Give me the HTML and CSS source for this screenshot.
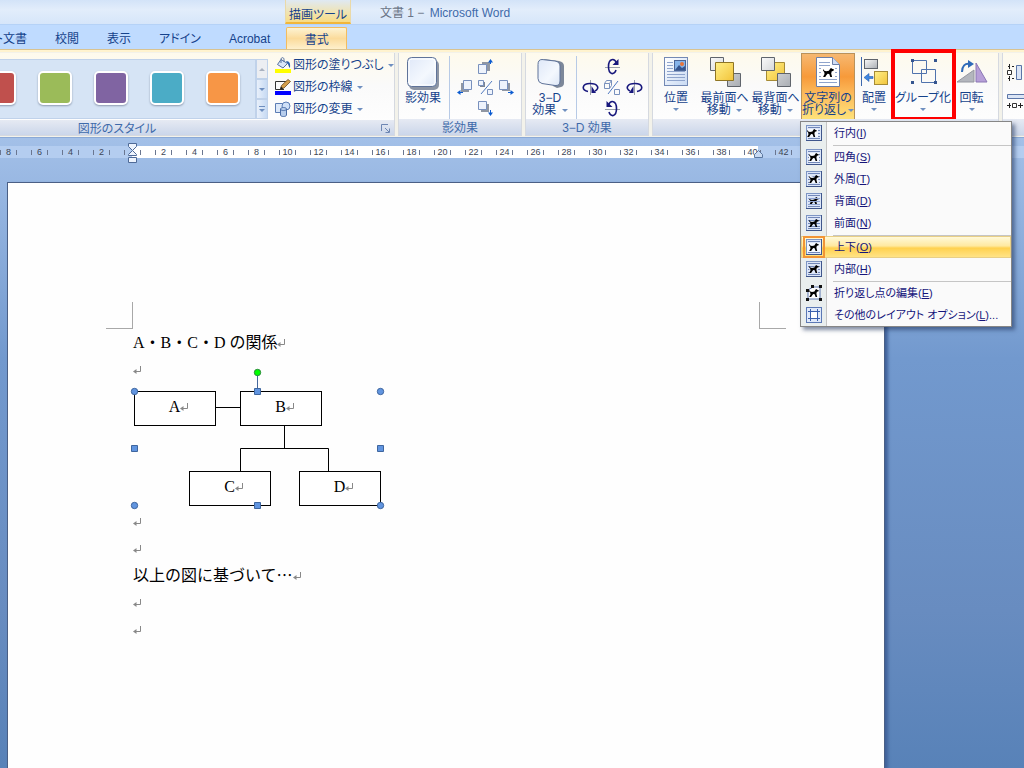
FILE: index.html
```html
<!DOCTYPE html>
<html lang="ja">
<head>
<meta charset="utf-8">
<title>文書 1 - Microsoft Word</title>
<link rel="stylesheet" href="styles.css">
</head>
<body>
<svg class="defs" aria-hidden="true">
  <defs>
    <linearGradient id="g-tile" x1="0" y1="0" x2="1" y2="1"><stop offset="0" stop-color="#dfe8f8"/><stop offset=".6" stop-color="#f4f8fe"/><stop offset="1" stop-color="#dce6f6"/></linearGradient>
    <linearGradient id="g-gold" x1="0" y1="0" x2="1" y2="1"><stop offset="0" stop-color="#fff08a"/><stop offset="1" stop-color="#f2c43a"/></linearGradient>
    <linearGradient id="g-gray" x1="0" y1="0" x2="1" y2="1"><stop offset="0" stop-color="#fafafa"/><stop offset="1" stop-color="#a9adb3"/></linearGradient>
    <linearGradient id="g-doc" x1="0" y1="0" x2="1" y2="1"><stop offset="0" stop-color="#ffffff"/><stop offset="1" stop-color="#c9daf3"/></linearGradient>
    <symbol id="dog" viewBox="0 0 12 10"><path d="M0 1 1.400 3 3.500 3.600 6.500 3 8 .5 9 0 9.800.9 12 1.500 11.400 3.200 9.600 3.500 9 6 10 10H8L6.800 6.600 5 6.400 3.600 8 2.400 10H0L1.600 6.800 1.200 4.400 0 3Z" fill="#000"/></symbol>
    <symbol id="ret" viewBox="0 0 8 9"><path d="M7.500 0v5.500H1.500" fill="none" stroke="#888"/><path d="M0 5.500 3.500 3v5Z" fill="#888"/></symbol>
    <symbol id="lines" viewBox="0 0 16 16"><rect x=".5" y=".5" width="15" height="15" fill="#dce6f8" stroke="#7d95c4"/><path d="M0 15.500h16M15.500 0v16" stroke="#3f568c"/><path d="M2 2.500h12M2 5.500h12M2 8.500h12M2 11.500h12M2 13.500h12" stroke="#7288b8"/></symbol>
  </defs>
</svg>

<header class="titlebar">
  <span class="context">描画ツール</span>
  <h1 class="title">文書 1 − <span>Microsoft Word</span></h1>
</header>

<nav class="tabs">
  <button class="tab tab-cut">ト文書</button>
  <button class="tab">校閲</button>
  <button class="tab">表示</button>
  <button class="tab">アドイン</button>
  <button class="tab">Acrobat</button>
  <button class="tab tab-on">書式</button>
</nav>

<div class="ribbon">
  <section class="group group-styles">
    <div class="body">
      <div class="gallery">
        <button class="swatch red" aria-label="赤"></button>
        <button class="swatch green" aria-label="緑"></button>
        <button class="swatch purple" aria-label="紫"></button>
        <button class="swatch teal" aria-label="水色"></button>
        <button class="swatch orange" aria-label="オレンジ"></button>
      </div>
      <div class="scroller">
        <button class="off" aria-label="上へ"><i class="up"></i></button>
        <button aria-label="下へ"><i class="arrow"></i></button>
        <button aria-label="その他"><i class="bar"></i><i class="arrow"></i></button>
      </div>
      <div class="stack">
        <button class="small"><svg width="16" height="16" viewBox="0 0 16 16"><path d="M6 2.500 12.500 6.500 8 11 2.500 7.500Z" fill="#dbe6f7" stroke="#55709f"/><path d="M6 6V2.500C6 0 9 0 9 2.500V5" fill="none" stroke="#55709f"/><path d="M11 4c4 0 4.500 3 4 7-1.500-1-1.500-4-3-5Z" fill="#2f61ab"/><path d="M0 12h16v4H0z" fill="#ff0"/></svg>図形の塗りつぶし<i class="arrow"></i></button>
        <button class="small"><svg width="16" height="16" viewBox="0 0 16 16"><path d="M12 2.500H.5v8H9" fill="none" stroke="#333"/><path d="m5.500 10 1-3.500L13 .5l2.500 2L9 9Z" fill="#d6a04c" stroke="#6b4a1d" stroke-width=".8"/><path d="m5 10.500 1-3L8.500 9.500Z" fill="#222"/><path d="M0 12h16v4H0z" fill="#00f"/></svg>図形の枠線<i class="arrow"></i></button>
        <button class="small"><svg width="16" height="16" viewBox="0 0 16 16"><path d="M.5 2.500h10v9H.5z" fill="#dce8f9" stroke="#5b7cb4"/><circle cx="11" cy="5" r="4" fill="#cfe0f7" stroke="#5b7cb4"/><path d="M5.500 8v6c0 2 6 2 6 0V8c0-2-6-2-6 0Z" fill="#b7cdec" stroke="#4a6ca6"/><path d="M5.500 8c0 2 6 2 6 0" fill="none" stroke="#4a6ca6"/></svg>図形の変更<i class="arrow"></i></button>
      </div>
    </div>
    <footer class="caption">図形のスタイル<button class="launch" aria-label="図形の書式設定"><svg width="9" height="9" viewBox="0 0 9 9"><path d="M.5 7V.5H7M4 4l4 4M8.500 4.500v4h-4" fill="none" stroke="#6d86b3"/></svg></button></footer>
  </section>

  <section class="group group-fx">
    <div class="body">
      <button class="big"><svg width="34" height="34" viewBox="0 0 34 34"><rect x="3" y="4" width="30" height="30" rx="5" fill="#8c95a5"/><rect x="1.500" y="1.500" width="29" height="29" rx="4" fill="url(#g-tile)" stroke="#5f7399"/><rect x="3" y="3" width="26" height="26" rx="3" fill="none" stroke="#fff"/></svg><span>影効果</span><i class="arrow"></i></button>
      <div class="pad pad-shadow">
        <button class="n" aria-label="影を上へ"><svg width="15" height="15" viewBox="0 0 15 15"><path d="M4 3h8v9H4z" fill="#9097a3"/><path d="M.5 5.500h8v9h-8z" fill="#eef3fc" stroke="#7890bd"/><path d="M12.500 5V1" stroke="#0b5bd0"/><path d="M10 3.500 12.500 0 15 3.500Z" fill="#0b5bd0"/></svg></button>
        <button class="w" aria-label="影を左へ"><svg width="15" height="15" viewBox="0 0 15 15"><path d="M4 3h8v9H4z" fill="#9097a3"/><path d="M6.500.5h8v9h-8z" fill="#eef3fc" stroke="#7890bd"/><path d="M6 12.500H1" stroke="#0b5bd0"/><path d="M3.500 10 0 12.500 3.500 15Z" fill="#0b5bd0"/></svg></button>
        <button class="c" aria-label="影の切り替え"><svg width="15" height="15" viewBox="0 0 15 15"><path d="M2 2h5v5H2z" fill="#7d8490"/><path d="M.5.5h5v5h-5zM9.500 9.500h5v5h-5z" fill="#eef3fc" stroke="#7890bd"/><path d="M14 1 3 14" stroke="#4f79c0"/></svg></button>
        <button class="e" aria-label="影を右へ"><svg width="15" height="15" viewBox="0 0 15 15"><path d="M3 3h8v8H3z" fill="#9097a3"/><path d="M.5.5h8v9h-8z" fill="#eef3fc" stroke="#7890bd"/><path d="M9 12.500h5" stroke="#0b5bd0"/><path d="M11.500 10 15 12.500 11.500 15Z" fill="#0b5bd0"/></svg></button>
        <button class="s" aria-label="影を下へ"><svg width="15" height="15" viewBox="0 0 15 15"><path d="M3 3h8v8H3z" fill="#9097a3"/><path d="M.5.5h8v8h-8z" fill="#eef3fc" stroke="#7890bd"/><path d="M12.500 9v5" stroke="#0b5bd0"/><path d="M10 11.500 12.500 15 15 11.500Z" fill="#0b5bd0"/></svg></button>
      </div>
    </div>
    <footer class="caption">影効果</footer>
  </section>

  <section class="group group-fx">
    <div class="body">
      <button class="big"><svg width="34" height="34" viewBox="0 0 34 34"><path d="M11 3 26 5q5 1 5 5v17q0 3-3 4l-4 1-4-2Z" fill="#7c8799"/><path d="M9 3.500 22 5q5 1 5 5v15q0 5-5 4.500L9 27.500q-4-1-4-5v-14q0-5 4-5Z" fill="url(#g-tile)" stroke="#5f7399"/></svg><span>3−D<br>効果 <i class="arrow"></i></span></button>
      <div class="pad pad-3d">
        <button class="n" aria-label="上へ傾ける"><svg width="17" height="17" viewBox="0 0 17 17"><path d="M1 9.500h15" stroke="#9aa0aa"/><path d="M12 12c-1.500 5.500-7.500 5-7.500-3.500S10.500 0 12.500 5" fill="none" stroke="#17177c" stroke-width="1.600"/><path d="M8.500 7h6V1Z" fill="#17177c"/></svg></button>
        <button class="w" aria-label="左へ傾ける"><svg width="17" height="17" viewBox="0 0 17 17"><path d="M8.500 1v15" stroke="#9aa0aa"/><path d="M6 12.500C-1 11 0 4.500 8 4.500s10 5 5 7.500" fill="none" stroke="#17177c" stroke-width="1.600"/><path d="M9.500 7v7H14Z" fill="#17177c"/></svg></button>
        <button class="c" aria-label="3-D の切り替え"><svg width="16" height="15" viewBox="0 0 16 15"><path d="M.5 3.500h5v5h-5zl2-3h5v5l-2 3M5.500 3.500l2-3M10.500 9.500h5v5h-5z" fill="none" stroke="#7890bd"/><path d="M14 1 4 14" stroke="#4f79c0"/></svg></button>
        <button class="e" aria-label="右へ傾ける"><svg width="17" height="17" viewBox="0 0 17 17"><path d="M8.500 1v15" stroke="#9aa0aa"/><path d="M11 12.500c7-1.500 6-8-2-8s-10 5-5 7.500" fill="none" stroke="#17177c" stroke-width="1.600"/><path d="M7.500 7v7H3Z" fill="#17177c"/></svg></button>
        <button class="s" aria-label="下へ傾ける"><svg width="17" height="17" viewBox="0 0 17 17"><path d="M1 9.500h15" stroke="#9aa0aa"/><path d="M5 12c1.500 5.500 7.500 5 7.500-3.500S6.500 0 4.500 5" fill="none" stroke="#17177c" stroke-width="1.600"/><path d="M8.500 7h-6V1Z" fill="#17177c"/></svg></button>
      </div>
    </div>
    <footer class="caption">3−D 効果</footer>
  </section>

  <section class="group group-arrange">
    <div class="body">
      <button class="big b-pos"><svg width="34" height="34" viewBox="0 0 34 34"><rect x="5.500" y="1.500" width="23" height="28" fill="url(#g-doc)" stroke="#7389b4"/><path d="M8 6.500h6M8 9.500h6M8 12.500h6M8 15.500h18M8 18.500h18M8 21.500h18M8 24.500h18" stroke="#8fa4cc"/><rect x="15.500" y="4.500" width="11" height="10" fill="#86b4ea" stroke="#4a6596"/><path d="m16 14 4-5 3 3 3-2v4Z" fill="#35558f"/><circle cx="23" cy="8" r="2" fill="#e8743a"/></svg><span>位置</span><i class="arrow"></i></button>
      <button class="big b-ord"><svg width="34" height="34" viewBox="0 0 34 34"><path d="M2.500 1.500h13v13h-13zM19.500 17.500h13v13h-13z" fill="url(#g-gray)" stroke="#5f646c"/><path d="M7.500 6.500h18v18h-18z" fill="url(#g-gold)" stroke="#8f7524"/></svg><span>最前面へ<br>移動 <i class="arrow"></i></span></button>
      <button class="big b-ord"><svg width="34" height="34" viewBox="0 0 34 34"><path d="M7.500 6.500h18v18h-18z" fill="url(#g-gold)" stroke="#a68b35"/><path d="M2.500 1.500h13v13h-13zM18.500 17.500h13v13h-13z" fill="url(#g-gray)" stroke="#5f646c"/></svg><span>最背面へ<br>移動 <i class="arrow"></i></span></button>
      <div class="dropdown">
        <button class="big b-wrap" aria-expanded="true"><svg width="34" height="34" viewBox="0 0 34 34"><path d="M5.500 1.500h16l7 7v22h-23z" fill="#fff" stroke="#6c7fa8"/><path d="M21.500 1.500v7h7" fill="#cfdcf2" stroke="#6c7fa8"/><path d="M8 6.500h11M8 9.500h11M8 23.500h18M8 26.500h18M8 12.500h2M24 12.500h2M8 16.500h2M24 16.500h2M8 20.500h2M24 20.500h2" stroke="#8fa4cc"/><use href="#dog" x="12" y="12" width="11" height="9"/></svg><span>文字列の<br>折り返し<i class="arrow"></i></span></button>
        <div class="menu" role="menu">
          <button role="menuitem"><svg viewBox="0 0 16 16"><use href="#lines"/><path d="M1 4h11v8H1z" fill="#f4f8ff"/><use href="#dog" x="1" y="4" width="10" height="8"/></svg>行内(<u>I</u>)</button>
          <hr>
          <button role="menuitem"><svg viewBox="0 0 16 16"><use href="#lines"/><path d="M3 4h10v9H3z" fill="#f4f8ff"/><use href="#dog" x="3" y="4" width="10" height="8"/></svg>四角(<u>S</u>)</button>
          <button role="menuitem"><svg viewBox="0 0 16 16"><use href="#lines"/><path d="m2 4 6 2 5-2-1 4 1 4H3l1-4Z" fill="#f4f8ff"/><use href="#dog" x="3" y="4" width="10" height="8"/></svg>外周(<u>T</u>)</button>
          <button role="menuitem"><svg viewBox="0 0 16 16"><use href="#lines"/><use href="#dog" x="3" y="4" width="10" height="8"/><path d="M2 5.500h12M2 8.500h12M2 11.500h12" stroke="#8fa4d2"/></svg>背面(<u>D</u>)</button>
          <button role="menuitem"><svg viewBox="0 0 16 16"><use href="#lines"/><use href="#dog" x="3" y="4" width="10" height="8"/></svg>前面(<u>N</u>)</button>
          <hr>
          <button role="menuitem" class="on"><svg viewBox="0 0 16 16"><use href="#lines"/><path d="M1 4h14v9H1z" fill="#f4f8ff"/><use href="#dog" x="3" y="4" width="10" height="8"/></svg>上下(<u>O</u>)</button>
          <button role="menuitem"><svg viewBox="0 0 16 16"><use href="#lines"/><path d="m3 6 5 0 4-2v8H4Z" fill="#dfe8fa"/><use href="#dog" x="3" y="4" width="10" height="8"/></svg>内部(<u>H</u>)</button>
          <hr>
          <button role="menuitem"><svg viewBox="0 0 16 16"><path d="M2 5 7 2h7v12H2Z" fill="#fff" stroke="#5d76ae"/><path d="M0 4h3v3H0zM5 0h3v3H5zM13 0h3v3h-3zM0 13h3v3H0zM13 13h3v3h-3z" fill="#111"/><use href="#dog" x="3" y="4" width="10" height="8"/></svg>折り返し点の編集(<u>E</u>)</button>
          <button role="menuitem"><svg viewBox="0 0 16 16"><rect x=".5" y=".5" width="15" height="15" fill="#dfe9fa" stroke="#5b78b5"/><path d="M2 4.500h12M2 11.500h12M4.500 2v12M11.500 2v12" stroke="#3a5fae"/><path d="M5 5h6v6H5z" fill="#fff"/></svg>その他のレイアウト オプション(<u>L</u>)...</button>
        </div>
      </div>
      <button class="big b-align"><svg width="28" height="34" viewBox="0 0 28 34"><path d="M1.500 1v29" stroke="#3d68ae"/><rect x="4.500" y="3.500" width="13" height="9" fill="url(#g-gray)" stroke="#5f646c"/><rect x="14.500" y="15.500" width="13" height="13" fill="url(#g-gold)" stroke="#a68b35"/><path d="m4 21.500 5-4v3h4v2H9v3Z" fill="#3f86e0" stroke="#2a5fae" stroke-width=".6"/></svg><span>配置</span><i class="arrow"></i></button>
      <button class="big b-group"><svg width="34" height="34" viewBox="0 0 34 34"><path d="M6.500 4.500h14v13h-14zM15.500 13.500h14v13h-14z" fill="none" stroke="#4f72ad"/><path d="M5 3h3v3H5zM28 3h3v3h-3zM5 25h3v3H5zM28 25h3v3h-3z" fill="#35558f"/></svg><span>グループ化</span><i class="arrow"></i></button>
      <button class="big b-rot"><svg width="34" height="34" viewBox="0 0 34 34"><path d="M2 26 19 14v12Z" fill="#b3b6bd" stroke="#9497a0"/><path d="M21 26V7l11 19Z" fill="#b79fd8" stroke="#8a77b4"/><path d="M7 16c0-6 3-9 8-8" fill="none" stroke="#2f6ab8" stroke-width="2"/><path d="m13 4 6 4-6 4Z" fill="#2f6ab8"/></svg><span>回転</span><i class="arrow"></i></button>
    </div>
    <footer class="caption"></footer>
  </section>

  <section class="group group-size">
    <div class="body">
      <svg width="24" height="17" viewBox="0 0 24 17"><path d="M.5 6.500h4v4h-4z" fill="#fff" stroke="#333"/><path d="M1 2.500h8M1 14.500h8" stroke="#222" stroke-dasharray="2 2"/><path d="M2.500 0v5M2.500 12v5" stroke="#222"/><path d="M9.500 1.500h5v14h-5z" fill="#dbe5f5" stroke="#5b76a8"/></svg>
      <svg width="24" height="17" viewBox="0 0 24 17"><path d="M.5 1.500h18v4H.5z" fill="#dbe5f5" stroke="#5b76a8"/><path d="M5.500 10.500h4v4h-4z" fill="#fff" stroke="#333"/><path d="M0 12.500h4M11 12.500h5M2.500 10v5M13.500 10v5" stroke="#222"/></svg>
    </div>
    <footer class="caption"></footer>
  </section>
</div>

<main class="workspace">
  <div class="ruler">
    <div class="scale">
      <span>8</span><span>6</span><span>4</span><span>2</span><span></span><span>2</span><span>4</span><span>6</span><span>8</span><span>10</span><span>12</span><span>14</span><span>16</span><span>18</span><span>20</span><span>22</span><span>24</span><span>26</span><span>28</span><span>30</span><span>32</span><span>34</span><span>36</span><span>38</span><span>40</span><span>42</span>
    </div>
    <svg class="indent indent-left" width="9" height="20" viewBox="0 0 9 20"><path d="M.5.5h8v3l-4 4-4-4z" fill="#eef4fd" stroke="#4f6a97"/><path d="M4.500 7.500l4 4v1h-8v-1z" fill="#eef4fd" stroke="#4f6a97"/><path d="M.5 14.500h8v5h-8z" fill="#eef4fd" stroke="#4f6a97"/></svg>
    <svg class="indent indent-right" width="9" height="8" viewBox="0 0 9 8"><path d="M4.500.5l4 4v3h-8v-3z" fill="#c8daf3" stroke="#5a779f"/></svg>
  </div>

  <article class="paper">
    <div class="crops"><i class="crop-l"></i><i class="crop-r"></i></div>
    <div class="text">
      <p>A・B・C・D の関係<svg class="ret"><use href="#ret"/></svg></p>
      <p><svg class="ret"><use href="#ret"/></svg></p>
      <div class="diagram">
        <svg class="wires" width="247" height="115" viewBox="0 0 247 115"><path d="M81 16.500h26M150.500 34v23.500M106.500 81V57.500h88V81" fill="none" stroke="#000"/></svg>
        <div class="node node-a">A<svg class="ret"><use href="#ret"/></svg></div>
        <div class="node node-b">B<svg class="ret"><use href="#ret"/></svg></div>
        <div class="node node-c">C<svg class="ret"><use href="#ret"/></svg></div>
        <div class="node node-d">D<svg class="ret"><use href="#ret"/></svg></div>
        <svg class="handles" width="256" height="140" viewBox="0 0 256 140"><path d="M127.500 8v13" stroke="#44679c"/><g fill="#6195e0" stroke="#3f669f"><circle cx="4.500" cy="24.500" r="3.200"/><circle cx="250.500" cy="24.500" r="3.200"/><circle cx="4.500" cy="138.500" r="3.200"/><circle cx="250.500" cy="138.500" r="3.200"/><path d="M124.500 21.500h6v6h-6zM1.500 78.500h6v6h-6zM247.500 78.500h6v6h-6zM124.500 135.500h6v6h-6z"/></g><circle cx="127.500" cy="5.500" r="3.200" fill="#0f0" stroke="#2c8a3c"/></svg>
      </div>
      <p><svg class="ret"><use href="#ret"/></svg></p>
      <p><svg class="ret"><use href="#ret"/></svg></p>
      <p class="cjk">以上の図に基づいて…<svg class="ret"><use href="#ret"/></svg></p>
      <p><svg class="ret"><use href="#ret"/></svg></p>
      <p><svg class="ret"><use href="#ret"/></svg></p>
    </div>
  </article>
</main>
</body>
</html>
```

FILE: styles.css
```css
* { box-sizing: border-box; }

html, body { height: 100%; }

body {
  margin: 0;
  display: flex;
  flex-direction: column;
  overflow: hidden;
  background: #bfdbff;
  color: #15428b;
  font: 12px/12px "Liberation Sans", "Noto Sans CJK JP", sans-serif;
  font-feature-settings: "palt";
}

button {
  margin: 0;
  padding: 0;
  border: 0;
  background: none;
  color: inherit;
  font: inherit;
  font-feature-settings: inherit;
  white-space: nowrap;
}

svg { display: block; flex: none; }
.defs { position: absolute; width: 0; height: 0; }

/* Title bar */
.titlebar {
  flex: none;
  display: flex;
  height: 25px;
  padding-left: 285px;
  background: linear-gradient(#d3e3f8, #e2edfb 40%, #d6e6fa);
  border-bottom: 1px solid #b5d2f7;
}
.context {
  width: 66px;
  padding-top: 9px;
  text-align: center;
  background: linear-gradient(#dfe9f3, #f1e3ae 60%, #f8dc84);
  border-bottom: 2px solid #f2b63a;
  border-left: 1px solid #ead9a8;
  border-right: 1px solid #ead9a8;
}
.title {
  margin: 0 0 0 29px;
  padding-top: 7px;
  font-size: 12px;
  line-height: 12px;
  font-weight: 400;
  color: #6a7486;
}
.title span { color: #3e6aaa; margin-left: 2px; }

/* Tab strip */
.tabs {
  flex: none;
  display: flex;
  height: 24px;
  align-items: flex-end;
  background: #bfdbff;
}
.tab { height: 22px; padding: 2px 14px 0; }
.tab-cut { display: flex; align-items: center; justify-content: flex-end; width: 41px; }
.tab-on {
  width: 61px;
  margin-left: 2px;
  background: linear-gradient(#fdf3d3, #fbdb9b 50%, #fef0cc);
  border: 1px solid #f3bd5f;
  border-bottom: 0;
  border-radius: 2px 2px 0 0;
}

/* Ribbon */
.ribbon {
  flex: none;
  display: flex;
  gap: 3px;
  position: relative;
  z-index: 2;
  height: 89px;
  padding: 3px 0 1px;
  background: #f3f2ea;
  border-top: 1px solid #d9c391;
  border-bottom: 1px solid #8ba9d6;
  box-shadow: inset 0 2px #fff3cf;
}
.group {
  flex: none;
  display: flex;
  flex-direction: column;
  border: 1px solid #d5d9e0;
  border-top: 0;
  background: linear-gradient(#fefaec, #fafafa 40%, #ffffff);
}
.group-styles { width: 395px; border-left: 0; }
.group-fx { width: 124px; }
.group-arrange { width: 347px; }
.group-size { flex: 1 0 auto; }
.body { flex: 1; display: flex; }
.caption {
  position: relative;
  height: 16px;
  padding-top: 3px;
  text-align: center;
  color: #3e6aaa;
  background: linear-gradient(#e6eaf3, #cbd6ea);
}
.group-styles .caption { padding-right: 160px; }
.launch { position: absolute; right: 4px; top: 4px; }

.arrow {
  display: inline-block;
  width: 0;
  height: 0;
  margin-left: 6px;
  border: 3px solid transparent;
  border-top-color: #6f8fc0;
  border-bottom: 0;
  vertical-align: middle;
}

/* Shape style gallery */
.gallery {
  display: flex;
  gap: 22px;
  width: 256px;
  height: 60px;
  margin-top: 6px;
  padding-top: 11px;
  overflow: hidden;
  background: #d6e4f5;
  border: 1px solid #c0d2ea;
  border-left: 0;
}
.swatch {
  flex: none;
  width: 34px;
  height: 34px;
  border: 2px solid #fff;
  border-radius: 5px;
  box-shadow: 0 1px 2px #8d9ab0;
}
.swatch:first-child { margin-left: -18px; }
.red { background: #c0504d; }
.green { background: #9bbb59; }
.purple { background: #8064a2; }
.teal { background: #4bacc6; }
.orange { background: #f79646; }

.scroller {
  display: flex;
  flex-direction: column;
  width: 12px;
  height: 60px;
  margin-top: 6px;
}
.scroller button {
  flex: 1;
  display: flex;
  flex-direction: column;
  align-items: center;
  justify-content: center;
  gap: 2px;
  background: linear-gradient(90deg, #e8f0fb, #c7daf3);
  border: 1px solid #c0d2ea;
}
.scroller .off { background: #eceef2; }
.scroller .arrow { margin: 0; }
.up { border: 3px solid transparent; border-top: 0; border-bottom-color: #aab2c0; }
.bar { width: 6px; height: 1px; background: #6f8fc0; }

.stack { display: flex; flex-direction: column; padding: 1px 0 0 7px; }
.small { display: flex; align-items: center; gap: 2px; height: 22px; }
.small .arrow { margin-left: 2px; }

/* Large ribbon buttons */
.big {
  display: flex;
  flex-direction: column;
  align-items: center;
  flex: none;
  height: 66px;
  padding-top: 3px;
  text-align: center;
}
.big span { margin-top: 2px; }
.big span .arrow { margin-left: 2px; }
.big > .arrow { margin: 4px 0 0; }
.group-fx .big { width: 48px; }

.pad {
  display: grid;
  align-content: start;
  grid-template-rows: repeat(3, 21px);
  grid-template-areas: ". n ." "w c e" ". s .";
  margin: 3px 0 0 2px;
  padding-left: 4px;
  border-left: 1px solid #b7cae6;
}
.pad button { display: grid; place-items: center; }
.pad-shadow { grid-template-columns: repeat(3, 21px); }
.pad-3d { grid-template-columns: repeat(3, 22px); padding-left: 2px; }
.n { grid-area: n; }
.w { grid-area: w; }
.c { grid-area: c; }
.e { grid-area: e; }
.s { grid-area: s; }

.b-pos { width: 46px; }
.b-ord { width: 51px; }
.b-wrap {
  width: 54px;
  background: linear-gradient(#f6b871, #f79a3a 35%, #fcb95a 60%, #ffe27a);
  border: 1px solid #b9925a;
  border-bottom: 0;
  padding-top: 2px;
}
.b-align { width: 38px; }
.b-group { position: relative; width: 60px; }
.b-group::after {
  content: "";
  position: absolute;
  inset: -4px -3px -2px -2px;
  border: 4px solid #f00;
}
.b-rot { width: 37px; }

.group-size .body {
  flex-direction: column;
  gap: 12px;
  padding: 11px 0 0 4px;
}

/* Text wrapping menu */
.dropdown { position: relative; z-index: 3; }
.menu {
  position: absolute;
  left: -1px;
  top: 68px;
  width: 212px;
  background: linear-gradient(90deg, #e9eeee 25px, #c5c5c5 25px, #c5c5c5 26px, #fafafa 26px);
  border: 1px solid #868686;
  box-shadow: 3px 3px 4px rgba(30, 50, 90, .55);
  color: #15157a;
  font-size: 11px;
}
.menu button {
  display: flex;
  align-items: center;
  width: 100%;
  height: 22px;
  padding-left: 5px;
}
.menu svg { width: 16px; height: 16px; margin-right: 12px; }
.menu hr {
  height: 2px;
  margin: 0 0 0 32px;
  border: 0;
  border-bottom: 1px solid #c5c5c5;
}
.menu .on {
  background: linear-gradient(#fffbe0, #ffe9a0 45%, #ffd14f 55%, #ffe58c);
  box-shadow: inset 0 0 0 1px #e8cf86;
}
.menu .on svg { outline: 2px solid #f29536; outline-offset: 1px; }

/* Workspace */
.workspace {
  flex: 1;
  min-height: 0;
  display: flex;
  flex-direction: column;
  overflow: hidden;
  background: linear-gradient(#a3c0e8, #7299ce 35%, #688cc0 75%, #5882b8);
}
.ruler {
  flex: none;
  position: relative;
  height: 12px;
  margin: 8px 0 24px;
  background: linear-gradient(90deg, #b4cdf0 132px, #fff 132px, #fff 758px, #b4cdf0 758px);
}
.scale {
  display: flex;
  margin-left: -7px;
  overflow: hidden;
  font-size: 9px;
  color: #3d4656;
}
.scale span {
  flex: none;
  display: flex;
  align-items: center;
  justify-content: center;
  width: 31px;
  height: 12px;
  background:
    linear-gradient(#6a7690, #6a7690) 7px 4px / 1px 5px no-repeat,
    linear-gradient(#6a7690, #6a7690) 23px 4px / 1px 5px no-repeat;
}
.indent { position: absolute; }
.indent-left { left: 128px; top: -3px; }
.indent-right { left: 754px; top: 4px; }

.paper {
  flex: 1;
  margin: 0 139px 0 7px;
  background: #fefefe;
  border: 1px solid #4a5f85;
  border-bottom: 0;
  box-shadow: 3px 2px 3px #41629a;
  color: #000;
}
.crops {
  display: flex;
  justify-content: space-between;
  margin: 119px 98px 0 98px;
}
.crops i { width: 27px; height: 27px; border: 0 solid #a8a8a8; border-bottom-width: 1px; }
.crops .crop-l { border-right-width: 1px; }
.crops .crop-r { border-left-width: 1px; }

.text {
  padding-left: 125px;
  font: 16px/27px "Liberation Serif", "Noto Sans CJK JP", serif;
  font-feature-settings: normal;
}
.text p { margin: 0; height: 27px; }
.text .cjk { font-family: "Noto Sans CJK JP", sans-serif; line-height: 24px; }
.ret { display: inline-block; width: 8px; height: 9px; }

.diagram {
  position: relative;
  width: 247px;
  height: 115px;
  margin: 8px 0 2px 1px;
}
.wires { position: absolute; left: 0; top: 0; }
.handles { position: absolute; left: -4px; top: -24px; overflow: visible; }
.node {
  position: absolute;
  width: 82px;
  height: 35px;
  padding: 1px 0 0 7px;
  text-align: center;
  background: #fff;
  border: 1px solid #000;
}
.node-a { left: 0; top: 0; }
.node-b { left: 106px; top: 0; }
.node-c { left: 55px; top: 80px; }
.node-d { left: 165px; top: 80px; }
```
